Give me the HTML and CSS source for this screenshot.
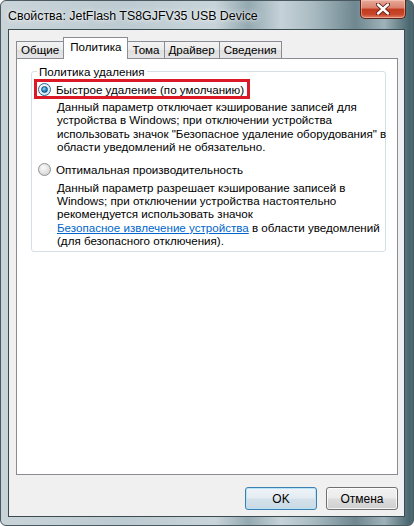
FILE: index.html
```html
<!DOCTYPE html>
<html lang="ru">
<head>
  <meta charset="UTF-8">
  <title>Свойства: JetFlash TS8GJFV35 USB Device</title>
  <link rel="stylesheet" href="styles.css">
</head>
<body>
  <div class="window">
    <div class="titlebar">
      <span class="title">Свойства: JetFlash TS8GJFV35 USB Device</span>
      <button class="close-btn" aria-label="Закрыть">
        <svg width="14" height="12" viewBox="0 0 14 12">
          <path d="M2 1.5 L12 10.5 M12 1.5 L2 10.5" stroke="#5a1e14" stroke-width="4.2" stroke-linecap="round" />
          <path d="M2 1.5 L12 10.5 M12 1.5 L2 10.5" stroke="#ffffff" stroke-width="2.4" stroke-linecap="round" />
        </svg>
      </button>
    </div>

    <div class="client">
      <div class="tab-strip">
        <div class="tab">Общие</div>
        <div class="tab active">Политика</div>
        <div class="tab">Тома</div>
        <div class="tab">Драйвер</div>
        <div class="tab">Сведения</div>
      </div>

      <div class="tab-panel">
        <fieldset class="group">
          <legend>Политика удаления</legend>

          <div class="option">
            <label class="choice highlight">
              <span class="radio checked"></span>
              <span>Быстрое удаление (по умолчанию)</span>
            </label>
            <p class="desc">
              Данный параметр отключает кэширование записей для<br>
              устройства в Windows; при отключении устройства<br>
              использовать значок "Безопасное удаление оборудования" в<br>
              области уведомлений не обязательно.
            </p>
          </div>

          <div class="option">
            <label class="choice">
              <span class="radio"></span>
              <span>Оптимальная производительность</span>
            </label>
            <p class="desc">
              Данный параметр разрешает кэширование записей в<br>
              Windows; при отключении устройства настоятельно<br>
              рекомендуется использовать значок<br>
              <a href="#" class="link">Безопасное извлечение устройства</a> в области уведомлений<br>
              (для безопасного отключения).
            </p>
          </div>
        </fieldset>
      </div>

      <div class="button-row">
        <button class="btn default">OK</button>
        <button class="btn">Отмена</button>
      </div>
    </div>
  </div>
</body>
</html>
```

FILE: styles.css
```css
html, body {
  margin: 0;
  padding: 0;
  background: #ffffff;
  font-family: 'Liberation Sans', Arial, sans-serif;
  font-size: 11.6px;
  color: #000000;
}

.window {
  box-sizing: border-box;
  width: 414px;
  height: 526px;
  display: flex;
  flex-direction: column;
  padding: 0 8px 8px 7px;
  border-radius: 6px;
  border: 1px solid #49595f;
  background:
    linear-gradient(to right, #c9d4d9 0%, #bccbd1 30%, #c8d4d9 52%, #94a9b1 60%, #c5d2d8 68%, #a8bac1 76%, #6f8790 86%, #9fb2b9 93%, #4c6871 99%);
}

/* title bar */
.titlebar {
  height: 28px;
  display: flex;
  align-items: flex-start;
  justify-content: space-between;
}

.title {
  padding: 8px 0 0 0;
  font-size: 12.4px;
  text-shadow: 0 0 6px rgba(255, 255, 255, 0.95), 0 0 2px rgba(255, 255, 255, 0.9);
}

.close-btn {
  width: 46px;
  height: 19px;
  margin: -1px -1px 0 0;
  padding: 0;
  display: flex;
  align-items: center;
  justify-content: center;
  border: 1px solid #5b2418;
  border-top: none;
  border-radius: 0 0 5px 5px;
  background: linear-gradient(to bottom, #e9a99a 0%, #d9816c 45%, #c23a1e 50%, #c8452a 80%, #e0826a 100%);
  box-shadow: inset 0 0 0 1px rgba(255, 220, 210, 0.45);
}

/* client area */
.client {
  flex: 1;
  display: flex;
  flex-direction: column;
  padding: 0 6px 0 7px;
  background: #f0f0f0;
  border: 1px solid #3a4b52;
}

.tab-strip {
  display: flex;
  align-items: flex-end;
  height: 21px;
  padding-top: 7px;
  position: relative;
  z-index: 2;
}

.tab {
  height: 16px;
  padding: 0 4px;
  line-height: 16px;
  border: 1px solid #898c95;
  border-bottom: none;
  margin-right: -1px;
  background: linear-gradient(to bottom, #f3f3f3 0%, #ebebeb 50%, #dedede 52%, #e6e6e6 100%);
}

.tab.active {
  height: 21px;
  line-height: 18px;
  margin-bottom: -1px;
  padding: 0 6px;
  background: #ffffff;
  position: relative;
  z-index: 3;
}

.tab-panel {
  flex: 1;
  background: #ffffff;
  border: 1px solid #898c95;
  padding: 6px 11px 0 14px;
}

/* group box */
.group {
  margin: 0;
  min-width: 0;
  padding: 0 0 3px 6px;
  border: 1px solid #d5dfe5;
  border-radius: 3px;
}

.group legend {
  padding: 0 2px;
  margin-left: -1px;
  line-height: 13px;
}

.option + .option {
  margin-top: 5px;
}

.choice {
  display: inline-flex;
  align-items: center;
  gap: 5px;
  height: 14px;
  padding: 0 3px 0 1px;
  margin-left: -4px;
  margin-top: 1px;
  border: 3px solid transparent;
}

.choice.highlight {
  border-color: #dc1a27;
}

.radio {
  box-sizing: border-box;
  width: 13px;
  height: 13px;
  border-radius: 50%;
  border: 1px solid #8e8f8f;
  background: radial-gradient(circle at 40% 35%, #fbfbfb 0%, #e6e6e6 45%, #c9c9c9 100%);
  display: flex;
  align-items: center;
  justify-content: center;
}

.radio.checked {
  border-color: #2c628b;
  background: radial-gradient(circle at 40% 35%, #ffffff 0%, #dfeffa 60%, #b5d4ea 100%);
}

.radio.checked::after {
  content: "";
  width: 7px;
  height: 7px;
  border-radius: 50%;
  background: radial-gradient(circle at 40% 35%, #9fe4fb 0%, #2a8fcd 45%, #0d4a7a 100%);
  border: 0.5px solid #1c5180;
  box-sizing: border-box;
}

.desc {
  margin: 1px 0 0 0;
  padding-left: 19px;
  line-height: 13.4px;
  white-space: nowrap;
}

.link {
  color: #0066cc;
  text-decoration: underline;
}

/* dialog buttons */
.button-row {
  display: flex;
  justify-content: flex-end;
  gap: 9px;
  margin: 12px 0 6px 0;
}

.btn {
  width: 72px;
  height: 23px;
  padding: 0;
  font-family: inherit;
  font-size: 12px;
  color: #000000;
  border: 1px solid #707070;
  border-radius: 3px;
  background: linear-gradient(to bottom, #f2f2f2 0%, #ebebeb 48%, #dddddd 52%, #cfcfcf 100%);
  box-shadow: inset 0 0 0 1px rgba(255, 255, 255, 0.8);
}

.btn.default {
  border-color: #3c7fb1;
  background: linear-gradient(to bottom, #eef4f8 0%, #e4ecf2 48%, #d4e1ea 52%, #c9d9e4 100%);
  box-shadow: inset 0 0 0 1px #b8e2f8;
}
```
